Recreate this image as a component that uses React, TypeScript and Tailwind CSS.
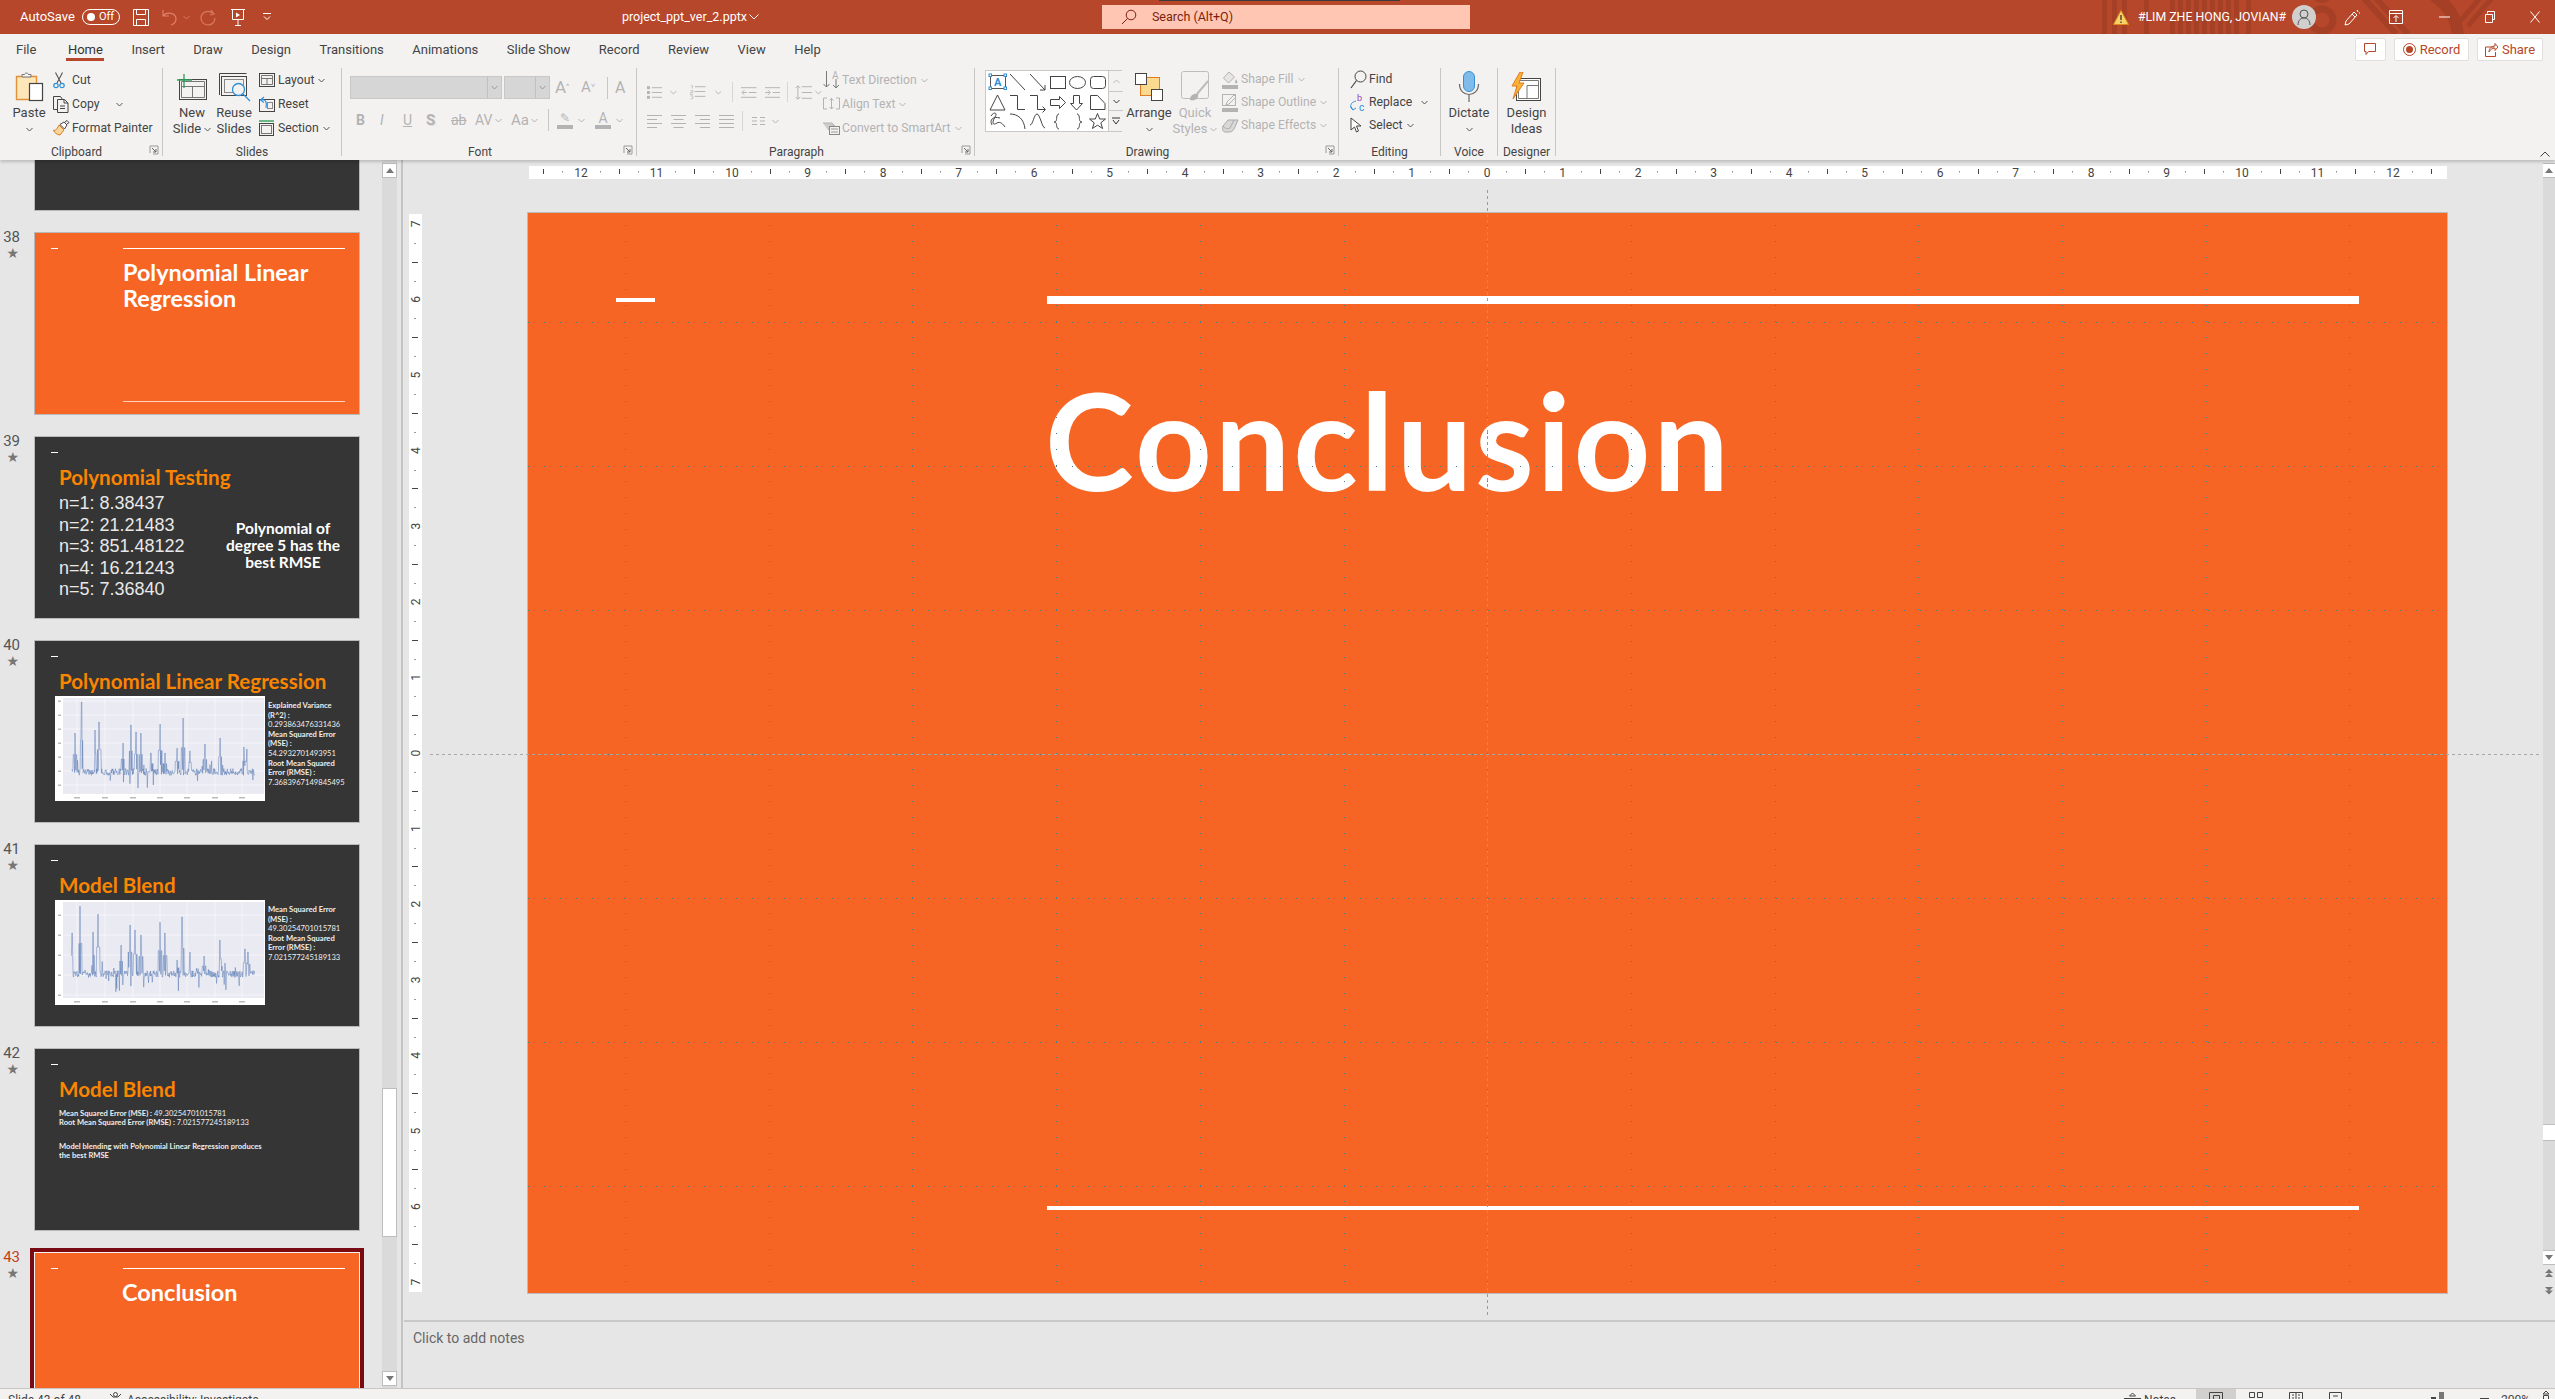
import React from "react";

const GY = "#b3b3b3";

function Chev({ c = "#555", className = "" }: { c?: string; className?: string }) {
  return (
    <svg width="7" height="5" viewBox="0 0 7 5" className={className}>
      <path d="M0.5 1 L3.5 4 L6.5 1" fill="none" stroke={c} strokeWidth="1" />
    </svg>
  );
}

function Launcher() {
  return (
    <svg width="10" height="10" viewBox="0 0 10 10" className="absolute right-[3px] bottom-[1px]">
      <path d="M1 8V1h8v8H4" fill="none" stroke="#999" strokeWidth="1" />
      <path d="M3 3l4 4M7 4v3H4" fill="none" stroke="#666" strokeWidth="1" />
    </svg>
  );
}

function Group({ label, className, children, launcher }: { label: string; className: string; children: React.ReactNode; launcher?: boolean }) {
  return (
    <div className={"relative h-[88px] border-r border-[#c8c6c4] shrink-0 " + className}>
      <div className="flex h-[76px]">{children}</div>
      <div className={"h-[12px] leading-[16px] text-center text-[12px] text-[#444] " + (launcher ? "pr-[18px]" : "")}>{label}</div>
      {launcher && <Launcher />}
    </div>
  );
}

function BigBtn({ icon, l1, l2, className = "", disabled, chev1 }: { icon: React.ReactNode; l1: string; l2?: string; className?: string; disabled?: boolean; chev1?: boolean }) {
  const tc = disabled ? "text-[#b3b3b3]" : "text-[#444]";
  return (
    <div className={"flex flex-col items-center shrink-0 " + className}>
      <div className="h-[37px] flex items-center justify-center">{icon}</div>
      <div className={"h-[16px] leading-[16px] text-[13px] whitespace-nowrap " + tc}>{l1}</div>
      <div className={"h-[16px] leading-[16px] text-[13px] whitespace-nowrap flex items-center gap-[3px] " + tc}>
        {l2}
        {(chev1 || l2 === undefined) && <Chev c={disabled ? GY : "#555"} />}
      </div>
    </div>
  );
}

function Row({ icon, text, chev, h = "h-[24px]", disabled, extra }: { icon: React.ReactNode; text: string; chev?: boolean; h?: string; disabled?: boolean; extra?: string }) {
  return (
    <div className={"flex items-center whitespace-nowrap text-[12.2px] " + h + " " + (disabled ? "text-[#b3b3b3]" : "text-[#444]")}>
      <div className="w-[19px] shrink-0 flex items-center">{icon}</div>
      <span>{text}</span>
      {chev && <Chev c={disabled ? GY : "#555"} className={extra ?? "ml-[4px]"} />}
    </div>
  );
}

const PasteI = (
  <svg width="29" height="31" viewBox="0 0 29 31">
    <path d="M1.5 5.5h20v23h-20z" fill="#fde6b8" stroke="#e0913a" strokeWidth="1.4" />
    <path d="M7 6V3.5h2.5C10 1.5 13 1.5 13.5 3.5H16V6z" fill="#f3f2f1" stroke="#777" strokeWidth="1" />
    <rect x="14.5" y="12.5" width="13" height="17" fill="#fff" stroke="#444" strokeWidth="1.2" />
  </svg>
);
const CutI = (
  <svg width="12" height="17" viewBox="0 0 12 17">
    <path d="M2.5 0.5L8 11M9.5 0.5L4 11" stroke="#555" strokeWidth="1.1" fill="none" />
    <circle cx="3" cy="13.5" r="2.2" fill="none" stroke="#2f8fd8" strokeWidth="1.2" />
    <circle cx="9" cy="13.5" r="2.2" fill="none" stroke="#2f8fd8" strokeWidth="1.2" />
  </svg>
);
const CopyI = (
  <svg width="16" height="17" viewBox="0 0 16 17">
    <path d="M4.5 13.5h-4v-13h7l2 3" fill="none" stroke="#444" />
    <path d="M4.5 3.5h7l3.5 3.5v9.5H4.5zM11 3.5V7h4M7 10h5M7 12.5h5" fill="none" stroke="#444" />
  </svg>
);
const PainterI = (
  <svg width="17" height="16" viewBox="0 0 17 16">
    <path d="M6 5l5 5-4 5c-2 0-6-2-6.5-5 2 1 3 0 5.5-5z" fill="#f8d59a" stroke="#e07b20" />
    <path d="M7 4.5l4-2.5 3 3-2.5 4z" fill="#fff" stroke="#444" />
    <path d="M12 2l2-1.5 2 2-2 1.5" fill="none" stroke="#444" />
  </svg>
);
const NewSlideI = (
  <svg width="32" height="28" viewBox="0 0 32 28">
    <rect x="3.5" y="6.5" width="27" height="20" fill="none" stroke="#444" />
    <path d="M5.5 8.5h23v16h-23zM5.5 13.5h23M16.5 13.5v11" fill="none" stroke="#777" />
    <path d="M8 1v14M1 7h15" stroke="#2e9e5b" strokeWidth="1.3" />
  </svg>
);
const ReuseI = (
  <svg width="33" height="31" viewBox="0 0 33 31">
    <path d="M1.5 24V2.5h27" fill="none" stroke="#444" />
    <rect x="3.5" y="5.5" width="25" height="19" fill="none" stroke="#444" />
    <rect x="6.5" y="8.5" width="19" height="13" fill="none" stroke="#888" />
    <circle cx="20.5" cy="18.5" r="6" fill="#f3f2f1" stroke="#2f8fd8" strokeWidth="1.3" />
    <path d="M25 23l7 7" stroke="#2f8fd8" strokeWidth="1.3" />
  </svg>
);
const LayoutI = (
  <svg width="16" height="14" viewBox="0 0 16 14">
    <rect x="0.5" y="0.5" width="15" height="13" fill="none" stroke="#444" />
    <path d="M2.5 2.5h11v9h-11zM2.5 5.5h11M8 5.5v6" fill="none" stroke="#777" />
  </svg>
);
const ResetI = (
  <svg width="16" height="16" viewBox="0 0 16 16">
    <rect x="0.5" y="3.5" width="15" height="12" fill="none" stroke="#444" />
    <rect x="8.5" y="6.5" width="5" height="6" fill="none" stroke="#888" />
    <path d="M5 1L1.5 4 5 6.5M2 4c5-1 6 2 5 8" fill="none" stroke="#2f8fd8" strokeWidth="1.1" />
  </svg>
);
const SectionI = (
  <svg width="16" height="16" viewBox="0 0 16 16">
    <path d="M0 1h15" stroke="#2e9e5b" strokeWidth="1.4" />
    <rect x="0.5" y="3.5" width="14" height="12" fill="none" stroke="#444" />
    <rect x="2.5" y="5.5" width="10" height="8" fill="none" stroke="#777" />
  </svg>
);

function Lines({ n = 3, w = 15, x = 0 }: { n?: number; w?: number; x?: number }) {
  return (
    <>
      {Array.from({ length: n }).map((_, i) => (
        <path key={i} d={`M${x} ${1.5 + i * 5}h${w}`} stroke={GY} />
      ))}
    </>
  );
}
const BulletI = (
  <svg width="16" height="13" viewBox="0 0 16 13">
    <rect x="0" y="0" width="3" height="3" fill={GY} />
    <rect x="0" y="5" width="3" height="3" fill={GY} />
    <rect x="0" y="10" width="3" height="3" fill={GY} />
    <Lines x={5} w={11} />
  </svg>
);
const NumI = (
  <svg width="16" height="15" viewBox="0 0 16 15">
    <path d="M1 0.5h1.5v3M0.5 5.5h2.5v2h-2.5v2h2.5M0.5 11h2.5v3h-2.5" fill="none" stroke={GY} strokeWidth=".7" />
    <Lines x={5} w={11} />
  </svg>
);
const IndLess = (
  <svg width="16" height="13" viewBox="0 0 16 13">
    <path d="M0 1.5h16M8 6.5h8M0 11.5h16M1 6.5h5M3.5 4l-2.5 2.5 2.5 2.5" fill="none" stroke={GY} />
  </svg>
);
const IndMore = (
  <svg width="16" height="13" viewBox="0 0 16 13">
    <path d="M0 1.5h16M8 6.5h8M0 11.5h16M0 6.5h5M3 4l2.5 2.5L3 9" fill="none" stroke={GY} />
  </svg>
);
const LineSp = (
  <svg width="18" height="15" viewBox="0 0 18 15">
    <path d="M3 0.5v14M0.5 3L3 0.5 5.5 3M0.5 12L3 14.5 5.5 12M7 1.5h11M7 7.5h11M7 13.5h11" fill="none" stroke={GY} />
  </svg>
);
function Align({ v }: { v: number }) {
  const paths = [
    "M0 1.5h15M0 5.5h10M0 9.5h15M0 13.5h10",
    "M0 1.5h15M2.5 5.5h10M0 9.5h15M2.5 13.5h10",
    "M0 1.5h15M5 5.5h10M0 9.5h15M5 13.5h10",
    "M0 1.5h15M0 5.5h15M0 9.5h15M0 13.5h15",
  ];
  return (
    <svg width="15" height="15" viewBox="0 0 15 15">
      <path d={paths[v]} stroke={GY} fill="none" />
    </svg>
  );
}
const ColsI = (
  <svg width="13" height="10" viewBox="0 0 13 10">
    <path d="M0 1.5h5M8 1.5h5M0 5h5M8 5h5M0 8.5h5M8 8.5h5" stroke={GY} />
  </svg>
);
const TextDirI = (
  <svg width="18" height="18" viewBox="0 0 18 18">
    <path d="M3.5 0v16M0.5 13l3 3 3-3M13 8v9M10 14l3 3 3-3" fill="none" stroke="#777" />
    <text x="9" y="8" fontSize="10" fill={GY} fontFamily="Roboto">A</text>
  </svg>
);
const AlignTextI = (
  <svg width="17" height="15" viewBox="0 0 17 15">
    <path d="M4 1H0.5v11H4M13 1h3.5v11H13M8.5 1v11M6.5 3.5l2-2 2 2M6.5 10l2 2 2-2" fill="none" stroke={GY} />
  </svg>
);
const SmartI = (
  <svg width="17" height="13" viewBox="0 0 17 13">
    <path d="M0 1h9l3 3H8l-3 4" fill="#ccc" stroke={GY} />
    <rect x="6.5" y="4.5" width="10" height="8" fill="#f3f2f1" stroke="#888" />
    <path d="M8 7h7M8 10h7" stroke="#999" />
  </svg>
);

const gallery = (
  <svg width="122" height="60" viewBox="0 0 122 60" className="shrink-0">
    <g fill="none" stroke="#444" strokeWidth="1">
      <rect x="4.5" y="4.5" width="15" height="13" stroke="#555" />
      <path d="M24 3l15 16M44 3l15 16M59 19v-5M59 19h-5" />
      <rect x="64.5" y="5.5" width="15" height="12" />
      <ellipse cx="91.5" cy="11.5" rx="8" ry="6" />
      <rect x="104.5" y="5.5" width="15" height="12" rx="3" />
      <path d="M11.5 24l-7.5 15h15z" />
      <path d="M24 24.5h7.5v14H39M44 24.5h7.5v14H59M56.5 35.5l3 3-3 3" />
      <path d="M64.5 28.5h9v-3l6 6-6 6v-3h-9z" />
      <path d="M87.5 24.5h6v8h3l-6 6.5-6-6.5h3z" />
      <path d="M104.5 24.5h7l7.5 8v6h-14.5z" />
      <path d="M5 45c3-5 7-3 4 1-3 5-3 9 2 6 3-2 6 1 8 4 M6 54c-3-5 1-9 8-7" />
      <path d="M24 43c8 0 14 5 15 15" />
      <path d="M44 54c3 0 4-11 7-11s5 14 8 14" />
      <path d="M73 43c-3 0-2 6-3 7-.5 1-1.5 1-2 1 .5 0 1.5 0 2 1 1 1 0 6 3 6" />
      <path d="M91 43c3 0 2 6 3 7 .5 1 1.5 1 2 1-.5 0-1.5 0-2 1-1 1 0 6-3 6" />
      <path d="M111.5 42.5l2.2 5.5h5.8l-4.7 3.8 1.8 5.7-5.1-3.3-5.1 3.3 1.8-5.7-4.7-3.8h5.8z" />
    </g>
    <g fill="#fff" stroke="#2f8fd8">
      <rect x="3" y="3" width="2.5" height="2.5" />
      <rect x="18" y="3" width="2.5" height="2.5" />
      <rect x="3" y="16" width="2.5" height="2.5" />
      <rect x="18" y="16" width="2.5" height="2.5" />
    </g>
    <text x="8" y="15" fontSize="11" fontWeight="700" fill="#2f8fd8" fontFamily="Roboto">A</text>
  </svg>
);
const ArrangeI = (
  <svg width="29" height="28" viewBox="0 0 29 28">
    <rect x="5.5" y="4.5" width="19" height="18" fill="#fbd98e" stroke="#e07b20" />
    <rect x="0.5" y="0.5" width="11" height="11" fill="#fff" stroke="#444" />
    <rect x="16.5" y="16.5" width="11" height="11" fill="#fff" stroke="#444" />
  </svg>
);
const QuickI = (
  <svg width="30" height="31" viewBox="0 0 30 31">
    <rect x="1.5" y="0.5" width="27" height="27" rx="2" fill="#f3f2f1" stroke="#bdbdbd" />
    <path d="M28 10L17 23" stroke="#bdbdbd" strokeWidth="2" />
    <path d="M10 29c0-5 4-7 8-6 1 5-3 7-8 6z" fill="#b3b3b3" />
  </svg>
);
const FillI = (
  <svg width="17" height="18" viewBox="0 0 17 18">
    <path d="M7 1L1.5 7l5 5 6-6z" fill="#e6e6e6" stroke={GY} />
    <path d="M14 8c1 2 2 3 1 4s-2 0-2-1z" fill={GY} />
    <rect x="0" y="14" width="16" height="4" fill={GY} />
  </svg>
);
const OutlineI = (
  <svg width="17" height="18" viewBox="0 0 17 18">
    <rect x="0.5" y="0.5" width="13" height="11" fill="none" stroke={GY} />
    <path d="M4 11l1-3 7-7 2 2-7 7z" fill="#f3f2f1" stroke={GY} />
    <rect x="0" y="14" width="16" height="4" fill={GY} />
  </svg>
);
const EffectsI = (
  <svg width="17" height="14" viewBox="0 0 17 14">
    <path d="M1 7l5-6h10l-4 9c-1 2-3 3-5 3H3c-2 0-3-3-2-6z" fill="#d8d8d8" stroke="#aaa" />
    <path d="M1 7c2 3 5 3 7 2l4-8" fill="none" stroke="#aaa" />
  </svg>
);
const FindI = (
  <svg width="17" height="19" viewBox="0 0 17 19">
    <circle cx="10.5" cy="6.5" r="5.5" fill="none" stroke="#444" />
    <path d="M6.5 10.5L1 18" stroke="#444" strokeWidth="1.2" />
  </svg>
);
const ReplaceI = (
  <svg width="17" height="19" viewBox="0 0 17 19">
    <path d="M6 8C2 9 0 11 1 15l2 2M1 13.5l2 3.5 3-2" fill="none" stroke="#2f8fd8" />
    <text x="7" y="8" fontSize="9" fill="#9a3fb5" fontFamily="Roboto">b</text>
    <text x="9" y="18" fontSize="10" fill="#2f8fd8" fontFamily="Roboto">c</text>
  </svg>
);
const SelectI = (
  <svg width="13" height="17" viewBox="0 0 13 17">
    <path d="M1 1v12l3.5-3 2 5 2-1-2-5H11z" fill="#fff" stroke="#444" />
  </svg>
);
const MicI = (
  <svg width="22" height="31" viewBox="0 0 22 31">
    <rect x="5.5" y="0.5" width="11" height="20" rx="5.5" fill="#7fbcea" stroke="#3a8fd0" />
    <path d="M1.5 13c0 14 19 14 19 0M11 24v7" fill="none" stroke="#666" strokeWidth="1.2" />
  </svg>
);
const DesignI = (
  <svg width="31" height="30" viewBox="0 0 31 30">
    <rect x="5.5" y="6.5" width="24" height="22" fill="#fff" stroke="#444" />
    <path d="M7.5 8.5h20v18h-20zM16 13.5h11.5M16 13.5v13" fill="none" stroke="#777" />
    <path d="M9 0L1 14h5L2 27l11-16H8l4-11z" fill="#f9b233" stroke="#e07b20" />
  </svg>
);

function Clipboard() {
  return (
    <Group label="Clipboard" className="w-[154px] ml-[9px]" launcher>
      <BigBtn className="w-[36px] ml-[2px]" icon={PasteI} l1="Paste" />
      <div className="ml-[6px]">
        <Row icon={CutI} text="Cut" />
        <Row icon={CopyI} text="Copy" chev extra="ml-[17px]" />
        <Row icon={PainterI} text="Format Painter" />
      </div>
    </Group>
  );
}
function Slides() {
  return (
    <Group label="Slides" className="w-[179px]">
      <BigBtn className="w-[44px] ml-[7px]" icon={NewSlideI} l1="New" l2="Slide" chev1 />
      <BigBtn className="w-[40px]" icon={ReuseI} l1="Reuse" l2="Slides" />
      <div className="ml-[5px]">
        <Row icon={LayoutI} text="Layout" chev />
        <Row icon={ResetI} text="Reset" />
        <Row icon={SectionI} text="Section" chev />
      </div>
    </Group>
  );
}
function Font() {
  const g = "text-[#b3b3b3]";
  return (
    <Group label="Font" className="w-[295px]" launcher>
      <div className="pl-[8px] pt-[8px]">
        <div className="flex items-center h-[23px]">
          <div className="w-[152px] h-[23px] bg-[#d6d6d6] border border-[#c8c8c8] flex justify-end items-center">
            <div className="w-[14px] h-full border-l border-[#c0c0c0] flex items-center justify-center"><Chev c="#999" /></div>
          </div>
          <div className="w-[46px] h-[23px] bg-[#d6d6d6] border border-[#c8c8c8] ml-[2px] flex justify-end items-center">
            <div className="w-[14px] h-full border-l border-[#c0c0c0] flex items-center justify-center"><Chev c="#999" /></div>
          </div>
          <span className={"ml-[5px] w-[26px] text-[17px] " + g}>A<sup className="text-[8px]">^</sup></span>
          <span className={"w-[26px] text-[15px] " + g}>A<sup className="text-[8px]">˅</sup></span>
          <div className="w-px h-[22px] bg-[#c8c6c4]" />
          <span className={"ml-[7px] text-[16px] " + g}>A</span>
        </div>
        <div className={"flex items-center h-[24px] mt-[9px] " + g}>
          <span className="ml-[6px] w-[24px] font-bold text-[14px]">B</span>
          <span className="w-[23px] italic text-[14px]">I</span>
          <span className="w-[23px] underline text-[14px]">U</span>
          <span className="w-[25px] font-bold text-[15px] [text-shadow:1px_1px_0_#ddd]">S</span>
          <span className="w-[24px] line-through text-[14px]">ab</span>
          <span className="w-[22px] text-[14px] flex items-center">AV</span>
          <Chev c={GY} className="mr-[9px] -ml-[2px]" />
          <span className="w-[20px] text-[15px]">Aa</span>
          <Chev c={GY} className="mr-[10px]" />
          <div className="w-px h-[22px] bg-[#c8c6c4] mr-[8px]" />
          <div className="w-[16px] flex flex-col items-center mr-[5px]">
            <span className="text-[12px] leading-[14px]">✎</span>
            <div className="w-[16px] h-[4px] bg-[#b3b3b3]" />
          </div>
          <Chev c={GY} className="mr-[10px]" />
          <div className="w-[16px] flex flex-col items-center mr-[5px]">
            <span className="text-[14px] leading-[14px]">A</span>
            <div className="w-[16px] h-[4px] bg-[#b3b3b3]" />
          </div>
          <Chev c={GY} />
        </div>
      </div>
    </Group>
  );
}
function Paragraph() {
  return (
    <Group label="Paragraph" className="w-[338px]" launcher>
      <div className="w-[185px] pl-[10px] shrink-0">
        <div className="flex items-center h-[24px] mt-[12px]">
          {BulletI}
          <Chev c={GY} className="ml-[8px] mr-[13px]" />
          {NumI}
          <Chev c={GY} className="ml-[9px] mr-[11px]" />
          <div className="w-px h-[20px] bg-[#d8d6d4] mr-[8px]" />
          {IndLess}
          <div className="w-[8px]" />
          {IndMore}
          <div className="w-px h-[20px] bg-[#d8d6d4] ml-[7px] mr-[7px]" />
          {LineSp}
          <Chev c={GY} className="ml-[3px]" />
        </div>
        <div className="flex items-center h-[24px] mt-[5px]">
          <Align v={0} />
          <div className="w-[9px]" />
          <Align v={1} />
          <div className="w-[9px]" />
          <Align v={2} />
          <div className="w-[9px]" />
          <Align v={3} />
          <div className="w-px h-[20px] bg-[#d8d6d4] ml-[8px] mr-[9px]" />
          {ColsI}
          <Chev c={GY} className="ml-[7px]" />
        </div>
      </div>
      <div className="ml-[1px]">
        <Row disabled icon={TextDirI} text="Text Direction" chev />
        <Row disabled icon={AlignTextI} text="Align Text" chev />
        <Row disabled icon={SmartI} text="Convert to SmartArt" chev />
      </div>
    </Group>
  );
}
function GalBtn({ h, children, b }: { h: string; children: React.ReactNode; b?: boolean }) {
  return (
    <div className={"w-[14px] flex items-center justify-center " + h + (b ? " bg-[#f3f2f1] border-t border-[#c8c8c8]" : " bg-[#f3f2f1]")}>{children}</div>
  );
}
function Drawing() {
  return (
    <Group label="Drawing" className="w-[364px]" launcher>
      <div className="ml-[10px] mt-[2px] w-[137px] h-[62px] flex bg-white border border-[#c8c8c8] shrink-0">
        {gallery}
        <div className="flex flex-col border-l border-[#c8c8c8]">
          <GalBtn h="h-[20px]"><Chev c="#bbb" className="rotate-180" /></GalBtn>
          <GalBtn b h="h-[19px]"><Chev c="#333" /></GalBtn>
          <GalBtn b h="h-[21px]">
            <svg width="8" height="8" viewBox="0 0 8 8"><path d="M0 1h8M1 3l3 4 3-4" fill="none" stroke="#333" /></svg>
          </GalBtn>
        </div>
      </div>
      <BigBtn className="w-[46px] ml-[4px]" icon={ArrangeI} l1="Arrange" />
      <BigBtn disabled className="w-[44px] ml-[1px]" icon={QuickI} l1="Quick" l2="Styles" chev1 />
      <div className="ml-[5px]">
        <Row disabled h="h-[23px]" icon={FillI} text="Shape Fill" chev />
        <Row disabled h="h-[23px]" icon={OutlineI} text="Shape Outline" chev />
        <Row disabled h="h-[23px]" icon={EffectsI} text="Shape Effects" chev />
      </div>
    </Group>
  );
}
function Editing() {
  return (
    <Group label="Editing" className="w-[102px]">
      <div className="ml-[11px]">
        <Row h="h-[23px]" icon={FindI} text="Find" />
        <Row h="h-[23px]" icon={ReplaceI} text="Replace" chev extra="ml-[9px]" />
        <Row h="h-[23px]" icon={SelectI} text="Select" chev />
      </div>
    </Group>
  );
}

function TitleBar() {
  return (
    <div className="relative h-[34px] bg-[#b7472a] text-white flex items-center overflow-hidden text-[13px] shrink-0">
      <svg className="absolute left-[2100px] top-0" width="410" height="34" viewBox="0 0 410 34">
        <g fill="#a54026">
          {[2, 12, 22, 44, 70, 78, 86, 94, 102, 110, 118, 126, 134, 146].map((x) => (
            <rect key={x} x={x} y="0" width="5" height="34" />
          ))}
        </g>
        <g fill="none" stroke="#a54026">
          <circle cx="222" cy="20" r="11" strokeWidth="7" />
          <circle cx="222" cy="-8" r="9" strokeWidth="4" fill="#a54026" />
          <path d="M262 -4L296 34M274 -4L308 34" strokeWidth="6" />
          <path d="M334 -4C352 8 358 22 358 40" strokeWidth="12" />
          <path d="M380 -2L356 26M392 -2L368 26" strokeWidth="5" />
        </g>
      </svg>
      <div className="absolute left-[1159px] top-0 w-[241px] h-px bg-[#3b3b3b]" />
      <span className="ml-[20px] relative">AutoSave</span>
      <div className="ml-[7px] relative w-[38px] h-[16px] rounded-full border border-white flex items-center text-[11px]">
        <div className="ml-[4px] w-[8px] h-[8px] rounded-full bg-white" />
        <span className="ml-[4px]">Off</span>
      </div>
      <svg className="ml-[13px] relative" width="16" height="17" viewBox="0 0 16 17">
        <path d="M0.5 0.5h15v16h-15zM3.5 0.5v5h9v-5M3.5 16.5v-6h9v6" fill="none" stroke="#fff" />
      </svg>
      <svg className="ml-[13px] relative" width="16" height="17" viewBox="0 0 16 17">
        <path d="M1 1v6h6M1 7c4-5 13-3 13 3 0 3-2 5-5 6" fill="none" stroke="#e0806a" strokeWidth="1.2" />
      </svg>
      <Chev c="#d67a63" className="ml-[5px]" />
      <svg className="ml-[10px] relative" width="17" height="17" viewBox="0 0 17 17">
        <path d="M11 1l3 4-4 1M13 4C7 0 1 4 1 9c0 5 4 7 7 7 4 0 7-3 7-7" fill="none" stroke="#d67a63" strokeWidth="1.2" />
      </svg>
      <svg className="ml-[14px] relative" width="14" height="17" viewBox="0 0 14 17">
        <path d="M0 0.5h14M1.5 0.5v10h11v-10M7 10.5V17M4 16.5h6" fill="none" stroke="#fff" />
        <path d="M5 3.5l4 2.5-4 2.5z" fill="#fff" />
      </svg>
      <svg className="ml-[18px] relative" width="8" height="8" viewBox="0 0 8 8">
        <path d="M0 0.5h8M1 3.5l3 3 3-3" fill="none" stroke="#fff" />
      </svg>
      <span className="ml-[351px] relative w-[117px] whitespace-nowrap text-[12.5px]">project_ppt_ver_2.pptx</span>
      <svg className="ml-[10px] relative" width="10" height="6" viewBox="0 0 10 6">
        <path d="M0.5 0.5L5 5l4.5-4.5" fill="none" stroke="#fff" />
      </svg>
      <div className="ml-[343px] relative w-[368px] h-[24px] bg-[#ffc7b3] flex items-center text-[#7a1f10] text-[12.5px]">
        <svg className="ml-[19px]" width="16" height="16" viewBox="0 0 16 16">
          <circle cx="10" cy="6" r="4.8" fill="none" stroke="#7a1f10" />
          <path d="M6.5 9.5L1 15" stroke="#7a1f10" />
        </svg>
        <span className="ml-[15px]">Search (Alt+Q)</span>
      </div>
      <svg className="ml-[643px] relative" width="16" height="15" viewBox="0 0 16 15">
        <path d="M8 0.5L15.5 14.5H0.5z" fill="#f6d364" stroke="#e08a1e" />
        <path d="M8 5v5M8 11.5v1.5" stroke="#333" strokeWidth="1.3" />
      </svg>
      <span className="ml-[9px] relative w-[144px] whitespace-nowrap text-[12.3px]">#LIM ZHE HONG, JOVIAN#</span>
      <div className="ml-[10px] relative w-[24px] h-[24px] rounded-full bg-[#d0cfce] flex items-center justify-center">
        <svg width="14" height="17" viewBox="0 0 14 17">
          <circle cx="7" cy="5" r="4" fill="none" stroke="#555" />
          <path d="M1 16c0-5 3-7 6-7s6 2 6 7" fill="none" stroke="#555" />
        </svg>
      </div>
      <svg className="ml-[28px] relative" width="16" height="17" viewBox="0 0 16 17">
        <path d="M10 3L2 12l-1 4 4-1 8-9zM8 5l3 3M13 1l1 2M15 4l1 0" fill="none" stroke="#fff" />
      </svg>
      <svg className="ml-[29px] relative" width="14" height="14" viewBox="0 0 14 14">
        <path d="M0.5 0.5h13v13h-13zM0.5 3.5h13M7 12V6M4.5 8L7 5.5 9.5 8" fill="none" stroke="#fff" />
      </svg>
      <svg className="ml-[36px] relative" width="11" height="2" viewBox="0 0 11 2"><path d="M0 1h11" stroke="#fff" /></svg>
      <svg className="ml-[35px] relative" width="10" height="12" viewBox="0 0 10 12">
        <path d="M2.5 2.5V0.5h7v8H7.5M0.5 3.5h7v8h-7z" fill="none" stroke="#fff" />
      </svg>
      <svg className="ml-[35px] relative" width="10" height="12" viewBox="0 0 10 12">
        <path d="M0.5 0.5l9 11M9.5 0.5l-9 11" stroke="#fff" />
      </svg>
    </div>
  );
}

function Ribbon() {
  const tabs = ["File", "Home", "Insert", "Draw", "Design", "Transitions", "Animations", "Slide Show", "Record", "Review", "View", "Help"];
  return (
    <div className="relative z-10 h-[126px] bg-[#f3f2f1] shrink-0 shadow-[0_2px_3px_rgba(0,0,0,0.18)] [font-family:Roboto,sans-serif]">
      <div className="h-[28px] flex items-center">
        <div className="flex pl-[16px] mt-[3px] gap-[28.5px] text-[13px] text-[#444]">
          {tabs.map((t) => (
            <div key={t} className={"relative " + (t === "Home" ? "text-[#333]" : t === "File" ? "mr-[3px]" : "")}>
              {t}
              {t === "Home" && <div className="absolute -left-[2px] -right-[1px] top-[18px] h-[3px] bg-[#b7472a]" />}
            </div>
          ))}
        </div>
        <div className="ml-auto mr-[12px] mt-[3px] flex gap-[8px] text-[13px] text-[#b7472a]">
          <div className="w-[31px] h-[23px] bg-white border border-[#e1dfdd] rounded-[2px] flex items-center justify-center">
            <svg width="13" height="14" viewBox="0 0 13 14"><path d="M0.5 0.5h11v8h-7l-2.5 3v-3h-1.5z" fill="none" stroke="#b7472a" /></svg>
          </div>
          <div className="w-[75px] h-[23px] bg-white border border-[#e1dfdd] rounded-[2px] flex items-center justify-center gap-[4px]">
            <svg width="13" height="13" viewBox="0 0 13 13"><circle cx="6.5" cy="6.5" r="6" fill="none" stroke="#b7472a" /><circle cx="6.5" cy="6.5" r="3.5" fill="#b7472a" /></svg>
            Record
          </div>
          <div className="w-[66px] h-[23px] bg-white border border-[#e1dfdd] rounded-[2px] flex items-center justify-center gap-[4px]">
            <svg width="13" height="14" viewBox="0 0 13 14"><path d="M9 4H0.5v9.5h10V9M4 9c0-4 3-6 6-6V0.5L13 4l-3 3.5V5C7 5 5 7 4 9z" fill="none" stroke="#b7472a" /></svg>
            Share
          </div>
        </div>
      </div>
      <div className="flex mt-[6px]">
        <Clipboard />
        <Slides />
        <Font />
        <Paragraph />
        <Drawing />
        <Editing />
        <Group label="Voice" className="w-[57px]">
          <BigBtn className="w-[56px]" icon={MicI} l1="Dictate" />
        </Group>
        <Group label="Designer" className="w-[58px]">
          <BigBtn className="w-[57px]" icon={DesignI} l1="Design" l2="Ideas" />
        </Group>
      </div>
      <svg className="absolute right-[5px] top-[117px]" width="10" height="6" viewBox="0 0 10 6">
        <path d="M0.5 5.5L5 1l4.5 4.5" fill="none" stroke="#444" />
      </svg>
    </div>
  );
}

function rng(seed: number) {
  let s = seed;
  return () => {
    s = (s * 16807) % 2147483647;
    return s / 2147483647;
  };
}
function makeLine(seed: number, spikes: number[][], x0: number, x1: number, base: number) {
  const r = rng(seed);
  const pts: string[] = [];
  const n = 430;
  for (let i = 0; i < n; i++) {
    const x = x0 + ((x1 - x0) * i) / n;
    const dip = r() < 0.05 ? 6 + r() * 10 : 0;
    let y = base + (r() - 0.5) * 7 + dip;
    if (r() < 0.06) y -= r() * 10;
    for (const [sx, sy] of spikes) {
      if (Math.abs(x - sx) < 0.3) y = sy;
      else if (Math.abs(x - sx) < 2 && r() < 0.5) y = Math.min(y, sy + (base - sy) * 0.55);
    }
    pts.push(`${x.toFixed(1)},${y.toFixed(1)}`);
  }
  return pts.join(" ");
}
const spikes40 = [[20, 37], [26.5, 6], [40, 34], [44, 26], [68, 47], [76, 29], [81, 36], [86, 37], [96, 57], [105, 28], [110, 57], [122, 52], [128, 22], [135, 55], [150, 48], [165, 42], [189, 51], [192, 53]];
const spikes41 = [[17, 33], [25, 6], [38, 32], [43, 14], [66, 45], [75, 25], [80, 30], [86, 35], [105, 22], [110, 33], [122, 60], [127, 17], [135, 52], [149, 56], [165, 40], [190, 49], [193, 52]];
const line40 = makeLine(20231, spikes40, 17, 200, 76);
const line41 = makeLine(77123, spikes41, 16, 200, 74);

function Chart({ pts, top }: { pts: string; top?: boolean }) {
  const ys = top ? [5, 19, 33, 47, 61, 75, 89] : [15, 35, 55, 75, 95];
  return (
    <svg width="210" height="105" viewBox="0 0 210 105" className="absolute left-[20px] top-[55px] bg-white">
      <rect x="8" y="2" width="201" height="96" fill="#eaeaf2" />
      {ys.map((y) => (
        <path key={y} d={`M8 ${y}h201`} stroke="#fff" strokeWidth=".5" />
      ))}
      {[22, 50, 78, 105, 132, 160, 187].map((x) => (
        <g key={x}>
          <path d={`M${x} 2v96`} stroke="#fff" strokeWidth=".5" />
          <rect x={x - 3} y="101" width="6" height="1.5" fill="#bbb" />
        </g>
      ))}
      {ys.map((y) => (
        <rect key={y} x="3" y={y - 0.5} width="3" height="1.5" fill="#bbb" />
      ))}
      <polyline points={pts} fill="none" stroke="#4c72b0" strokeWidth=".5" strokeOpacity=".9" />
    </svg>
  );
}

function Dash() {
  return <div className="absolute left-[16px] top-[15px] w-[7px] h-px bg-white" />;
}
function HLine({ bottom }: { bottom?: boolean }) {
  return <div className={"absolute left-[88px] w-[222px] h-px bg-white " + (bottom ? "top-[168px] opacity-70" : "top-[15px]")} />;
}
const tf = "[font-family:Lato,sans-serif]";

function Thumb({ n, dark, selected, children }: { n: number; dark?: boolean; selected?: boolean; children: React.ReactNode }) {
  return (
    <div className="flex h-[183px] shrink-0 mb-[21px]">
      <div className="w-[34px] shrink-0 flex flex-col">
        <div className={"w-[20px] text-right text-[15px] leading-[18px] mt-[-4px] " + (selected ? "text-[#c43e1c]" : "text-[#555]")}>{n}</div>
        <div className="w-[20px] text-right pr-[1px] text-[14px] leading-[14px] text-[#777] [font-family:'DejaVu_Sans',sans-serif]">★</div>
      </div>
      <div className={"relative w-[326px] h-[183px] shrink-0 border box-border " + (dark ? "bg-[#353535] " : "bg-[#f66523] ") + (selected ? "border-[#f4f4f4] shadow-[0_0_0_4px_#7a0a12]" : "border-[#b9b9b9]")}>
        <div className="absolute inset-0 overflow-hidden">{children}</div>
      </div>
    </div>
  );
}
const orangeT = "absolute left-[24px] text-[#fb8500] font-bold whitespace-nowrap leading-[26px] " + tf;
const tiny = "absolute text-[#eee] font-bold leading-[9.6px] text-[7.6px] " + tf;

function Thumbs() {
  return (
    <div className="w-[382px] overflow-hidden flex flex-col shrink-0 [font-family:Roboto,sans-serif]">
      <div className="ml-[34px] w-[326px] h-[51px] bg-[#353535] border-x border-b border-[#b9b9b9] mb-[21px] shrink-0" />
      <Thumb n={38}>
        <Dash />
        <HLine />
        <HLine bottom />
        <div className={"absolute left-[88px] top-[26px] text-white font-bold text-[23.4px] leading-[26px] whitespace-nowrap " + tf}>
          Polynomial Linear<br />Regression
        </div>
      </Thumb>
      <Thumb n={39} dark>
        <Dash />
        <div className={orangeT + " top-[27px] text-[20.6px]"}>Polynomial Testing</div>
        <div className="absolute left-[24px] top-[56px] text-[18px] leading-[21.5px] text-[#e8e8e8] [font-family:'Liberation_Sans',sans-serif] whitespace-nowrap">
          n=1: 8.38437<br />n=2: 21.21483<br />n=3: 851.48122<br />n=4: 16.21243<br />n=5: 7.36840
        </div>
        <div className={"absolute left-[173px] top-[83px] w-[150px] text-center text-white font-bold text-[15.5px] leading-[17px] " + tf}>
          Polynomial of<br />degree 5 has the<br />best RMSE
        </div>
      </Thumb>
      <Thumb n={40} dark>
        <Dash />
        <div className={orangeT + " top-[27px] text-[20.6px]"}>Polynomial Linear Regression</div>
        <Chart pts={line40} top />
        <div className={tiny + " left-[233px] top-[60px] w-[88px]"}>
          Explained Variance<br />(R^2) :<br /><span className="font-normal">0.293863476331436</span><br />
          Mean Squared Error<br />(MSE) :<br /><span className="font-normal">54.2932701493951</span><br />
          Root Mean Squared<br />Error (RMSE) :<br /><span className="font-normal">7.3683967149845495</span>
        </div>
      </Thumb>
      <Thumb n={41} dark>
        <Dash />
        <div className={orangeT + " top-[27px] text-[20.6px]"}>Model Blend</div>
        <Chart pts={line41} />
        <div className={tiny + " left-[233px] top-[60px] w-[88px]"}>
          Mean Squared Error<br />(MSE) :<br /><span className="font-normal">49.30254701015781</span><br />
          Root Mean Squared<br />Error (RMSE) :<br /><span className="font-normal">7.021577245189133</span>
        </div>
      </Thumb>
      <Thumb n={42} dark>
        <Dash />
        <div className={orangeT + " top-[27px] text-[20.6px]"}>Model Blend</div>
        <div className={tiny + " left-[24px] top-[60px] whitespace-nowrap leading-[9px]"}>
          Mean Squared Error (MSE) : <span className="font-normal">49.30254701015781</span><br />
          Root Mean Squared Error (RMSE) : <span className="font-normal">7.021577245189133</span>
        </div>
        <div className={tiny + " left-[24px] top-[93px] whitespace-nowrap leading-[9px]"}>
          Model blending with Polynomial Linear Regression produces<br />the best RMSE
        </div>
      </Thumb>
      <Thumb n={43} selected>
        <Dash />
        <HLine />
        <div className={"absolute left-[87px] top-[26px] text-white font-bold text-[23.5px] leading-[26px] whitespace-nowrap " + tf}>Conclusion</div>
      </Thumb>
    </div>
  );
}

function ScrollBtn({ down }: { down?: boolean }) {
  return (
    <div className="w-[15px] h-[15px] bg-white border border-[#bdbdbd] flex items-center justify-center shrink-0">
      <svg width="8" height="5" viewBox="0 0 8 5">
        <path d={down ? "M0 0h8L4 5z" : "M0 5h8L4 0z"} fill="#777" />
      </svg>
    </div>
  );
}

function TopRuler() {
  const ticks: React.ReactNode[] = [];
  for (let k = -50; k <= 50; k++) {
    const x = 1487 + 18.875 * k - 529;
    if (k % 4 === 0) {
      ticks.push(
        <text key={k} x={x} y="11" textAnchor="middle" fontSize="12" fill="#444" fontFamily="Roboto">
          {Math.abs(k / 4)}
        </text>
      );
    } else if (k % 2 === 0) {
      ticks.push(<path key={k} d={`M${Math.round(x) + 0.5} 3v5`} stroke="#444" />);
    } else {
      ticks.push(<path key={k} d={`M${Math.round(x) + 0.5} 5v1.5`} stroke="#888" />);
    }
  }
  return (
    <svg width="1918" height="13" viewBox="0 0 1918 13" className="block bg-white">
      {ticks}
    </svg>
  );
}
function LeftRuler() {
  const ticks: React.ReactNode[] = [];
  const c = 753 - 214;
  for (let k = -28; k <= 28; k++) {
    const y = c + 18.9 * k;
    if (k % 4 === 0) {
      ticks.push(
        <text key={k} x="0" y="0" transform={`translate(11 ${y}) rotate(-90)`} textAnchor="middle" fontSize="12" fill="#444" fontFamily="Roboto">
          {Math.abs(k / 4)}
        </text>
      );
    } else if (k % 2 === 0) {
      ticks.push(<path key={k} d={`M3 ${Math.round(y) + 0.5}h6`} stroke="#444" />);
    } else {
      ticks.push(<path key={k} d={`M5 ${Math.round(y) + 0.5}h2`} stroke="#999" />);
    }
  }
  return (
    <svg width="13" height="1078" viewBox="0 0 13 1078" className="block bg-white shrink-0">
      {ticks}
    </svg>
  );
}

function SlideCanvas() {
  const cols = Array.from({ length: 13 }, (_, i) => 97 + 143.7 * i);
  const rows = Array.from({ length: 7 }, (_, i) => 109 + 144 * i);
  return (
    <div className="relative w-[1921px] h-[1082px] ml-[105px] -mt-[2px] bg-[#f66523] border border-[#bcbcbc] box-border shrink-0 overflow-hidden">
      <div className="absolute left-[88px] top-[85px] w-[39px] h-[4px] bg-white" />
      <div className="absolute left-[519px] top-[83px] w-[1312px] h-[8px] bg-white" />
      <div className="absolute left-[519px] top-[993px] w-[1312px] h-[4px] bg-white" />
      <div className={"absolute left-[517px] top-[132px] text-white font-bold text-[134px] tracking-[2.8px] leading-[190px] whitespace-nowrap " + tf}>Conclusion</div>
      <svg className="absolute inset-0" width="1919" height="1080" viewBox="0 0 1919 1080">
        <g stroke="#3f7d8f" strokeWidth="1" strokeDasharray="1 15">
          {cols.map((x) => (
            <path key={x} d={`M${Math.round(x) + 0.5} 12V1080`} />
          ))}
          {rows.map((y) => (
            <path key={y} d={`M0 ${y + 0.5}H1919`} />
          ))}
        </g>
      </svg>
    </div>
  );
}

function Editor() {
  return (
    <div className="flex flex-col flex-1 min-w-0">
      <div className="relative flex h-[1160px] shrink-0">
        <div className="relative w-[2140px] shrink-0 pt-[6px]">
          <div className="ml-[126px]"><TopRuler /></div>
          <div className="flex mt-[35px] ml-[6px]">
            <LeftRuler />
            <SlideCanvas />
          </div>
          <svg className="absolute left-0 top-0 pointer-events-none" width="2140" height="1160" viewBox="0 0 2140 1160">
            <path d="M1084.5 30V1155" stroke="#9a9a9a" strokeDasharray="3 3" />
            <path d="M27 594.5H2137" stroke="#a8a8a8" strokeDasharray="3 3" />
          </svg>
        </div>
        <div className="w-[12px] flex flex-col items-center pt-[3px] shrink-0 overflow-hidden">
          <ScrollBtn />
          <div className="flex-none h-[1072px] w-[15px] bg-[#dadada] relative">
            <div className="absolute top-[946px] left-0 w-[15px] h-[17px] bg-white border border-[#bdbdbd]" />
          </div>
          <ScrollBtn down />
          <svg className="mt-[4px]" width="10" height="9" viewBox="0 0 10 9"><path d="M5 0l4 4H1zM5 4l4 4H1z" fill="#777" /></svg>
          <svg className="mt-[8px]" width="10" height="9" viewBox="0 0 10 9"><path d="M1 1h8L5 5zM1 4.5h8L5 8.5z" fill="#777" /></svg>
        </div>
      </div>
      <div className="flex-1 border-t-2 border-[#c8c8c8] pl-[9px] pt-[6px] text-[14px] text-[#666] [font-family:Roboto,sans-serif] ml-[1px]">
        Click to add notes
      </div>
    </div>
  );
}

function StatusBar() {
  return (
    <div className="relative h-[11px] bg-[#f3f2f1] border-t border-[#c8c6c4] shrink-0 overflow-hidden flex text-[12px] text-[#444] [font-family:Roboto,sans-serif] leading-[16px]">
      <span className="ml-[8px] mt-[3px] w-[100px]">Slide 43 of 48</span>
      <svg className="ml-[1px] mt-[3px]" width="13" height="10" viewBox="0 0 13 10">
        <circle cx="6.5" cy="2.5" r="2" fill="none" stroke="#444" />
        <path d="M1 2l3 3h5l3-3" fill="none" stroke="#444" />
      </svg>
      <span className="ml-[5px] mt-[3px] w-[140px]">Accessibility: Investigate</span>
      <svg className="ml-[1857px] mt-[3px]" width="17" height="10" viewBox="0 0 17 10"><path d="M8.5 1l3 3h-6zM0 6.5h17" fill="none" stroke="#444" /></svg>
      <span className="ml-[3px] mt-[3px] w-[52px]">Notes</span>
      <div className="w-[40px] h-[10px] bg-[#d2d0ce] flex justify-center pt-[3px]">
        <svg width="14" height="10" viewBox="0 0 14 10"><path d="M0.5 10V0.5h13V10M4.5 10V3.5h6V10" fill="none" stroke="#444" /></svg>
      </div>
      <svg className="ml-[13px] mt-[3px]" width="14" height="7" viewBox="0 0 14 7"><path d="M0.5 0.5h5v5h-5zM8.5 0.5h5v5h-5z" fill="none" stroke="#444" /></svg>
      <svg className="ml-[26px] mt-[3px]" width="14" height="10" viewBox="0 0 14 10"><path d="M0.5 10V0.5h13V10M7 0.5V10M3 3h2M3 6h2M9 3h2M9 6h2" fill="none" stroke="#444" /></svg>
      <svg className="ml-[26px] mt-[3px]" width="13" height="10" viewBox="0 0 13 10"><path d="M0.5 10V0.5h12V10M4 4h5" fill="none" stroke="#444" /></svg>
      <div className="ml-[21px] mt-[10px] w-[8px] h-px bg-[#444]" />
      <div className="ml-[60px] mt-[8px] w-[5px] h-[3px] bg-[#444]" />
      <div className="ml-[3px] mt-[3px] w-[5px] h-[8px] bg-[#777]" />
      <div className="ml-[36px] mt-[9px] w-[9px] h-px bg-[#444]" />
      <span className="ml-[12px] mt-[3px] w-[36px]">200%</span>
      <svg className="ml-[2px] mt-[2px]" width="14" height="10" viewBox="0 0 14 10"><path d="M7 0l3 3H4zM4.5 10V4.5h5V10" fill="none" stroke="#444" /></svg>
    </div>
  );
}

export default function App() {
  return (
    <div className="w-[2555px] h-[1399px] overflow-hidden flex flex-col bg-[#e6e6e6] [font-family:Roboto,sans-serif]">
      <TitleBar />
      <Ribbon />
      <div className="flex flex-1 min-h-0">
        <Thumbs />
        <div className="w-[15px] flex flex-col pt-[3px] pb-[2px] shrink-0 bg-[#dadada]">
          <ScrollBtn />
          <div className="h-[910px] shrink-0" />
          <div className="w-[15px] h-[149px] bg-white border border-[#bdbdbd] shrink-0" />
          <div className="flex-1" />
          <ScrollBtn down />
        </div>
        <div className="w-[4px] shrink-0" />
        <div className="w-[2px] bg-[#c4c4c4] shrink-0" />
        <Editor />
      </div>
      <StatusBar />
    </div>
  );
}
